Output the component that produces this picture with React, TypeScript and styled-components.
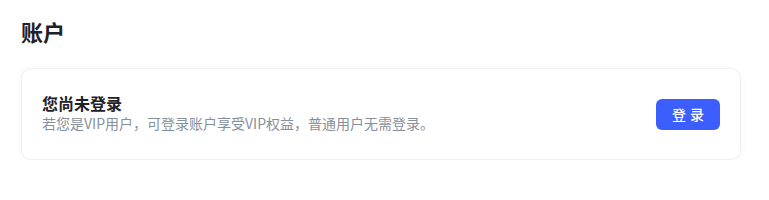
import React from "react";
import styled, { createGlobalStyle } from "styled-components";

const Global = createGlobalStyle`
  html, body { margin: 0; padding: 0; background: #ffffff; }
  body { font-family: "Noto Sans CJK SC", "Noto Sans", sans-serif; }
`;

const Page = styled.div`
  padding: 16px 28px 0 21px;
  width: 769px;
  box-sizing: border-box;
`;

const Heading = styled.h1`
  margin: 0 0 22px 0;
  font-size: 22px;
  line-height: 30px;
  font-weight: 700;
  color: #1d2129;
`;

const Card = styled.div`
  display: flex;
  align-items: center;
  justify-content: space-between;
  width: 720px;
  box-sizing: border-box;
  height: 92px;
  padding: 0 20px 0 20px;
  border: 1px solid #eef0f3;
  border-radius: 10px;
  background: #fff;
  box-shadow: 0 2px 8px rgba(0, 0, 0, 0.04);
`;

const Info = styled.div`
  display: flex;
  flex-direction: column;
  margin-bottom: 2px;
`;

const Title = styled.div`
  font-size: 16px;
  line-height: 21px;
  font-weight: 700;
  color: #1d2129;
`;

const Desc = styled.div`
  font-size: 14px;
  line-height: 19px;
  color: #86909c;
`;

const LoginButton = styled.button`
  width: 64px;
  height: 31px;
  border: none;
  border-radius: 6px;
  background: #3d5efe;
  color: #fff;
  font-family: inherit;
  font-size: 14px;
  font-weight: 500;
  letter-spacing: 4px;
  padding: 0 0 0 4px;
  cursor: pointer;
`;

export default function App() {
  return (
    <>
      <Global />
      <Page>
        <Heading>账户</Heading>
        <Card>
          <Info>
            <Title>您尚未登录</Title>
            <Desc>若您是VIP用户，可登录账户享受VIP权益，普通用户无需登录。</Desc>
          </Info>
          <LoginButton>登录</LoginButton>
        </Card>
      </Page>
    </>
  );
}
